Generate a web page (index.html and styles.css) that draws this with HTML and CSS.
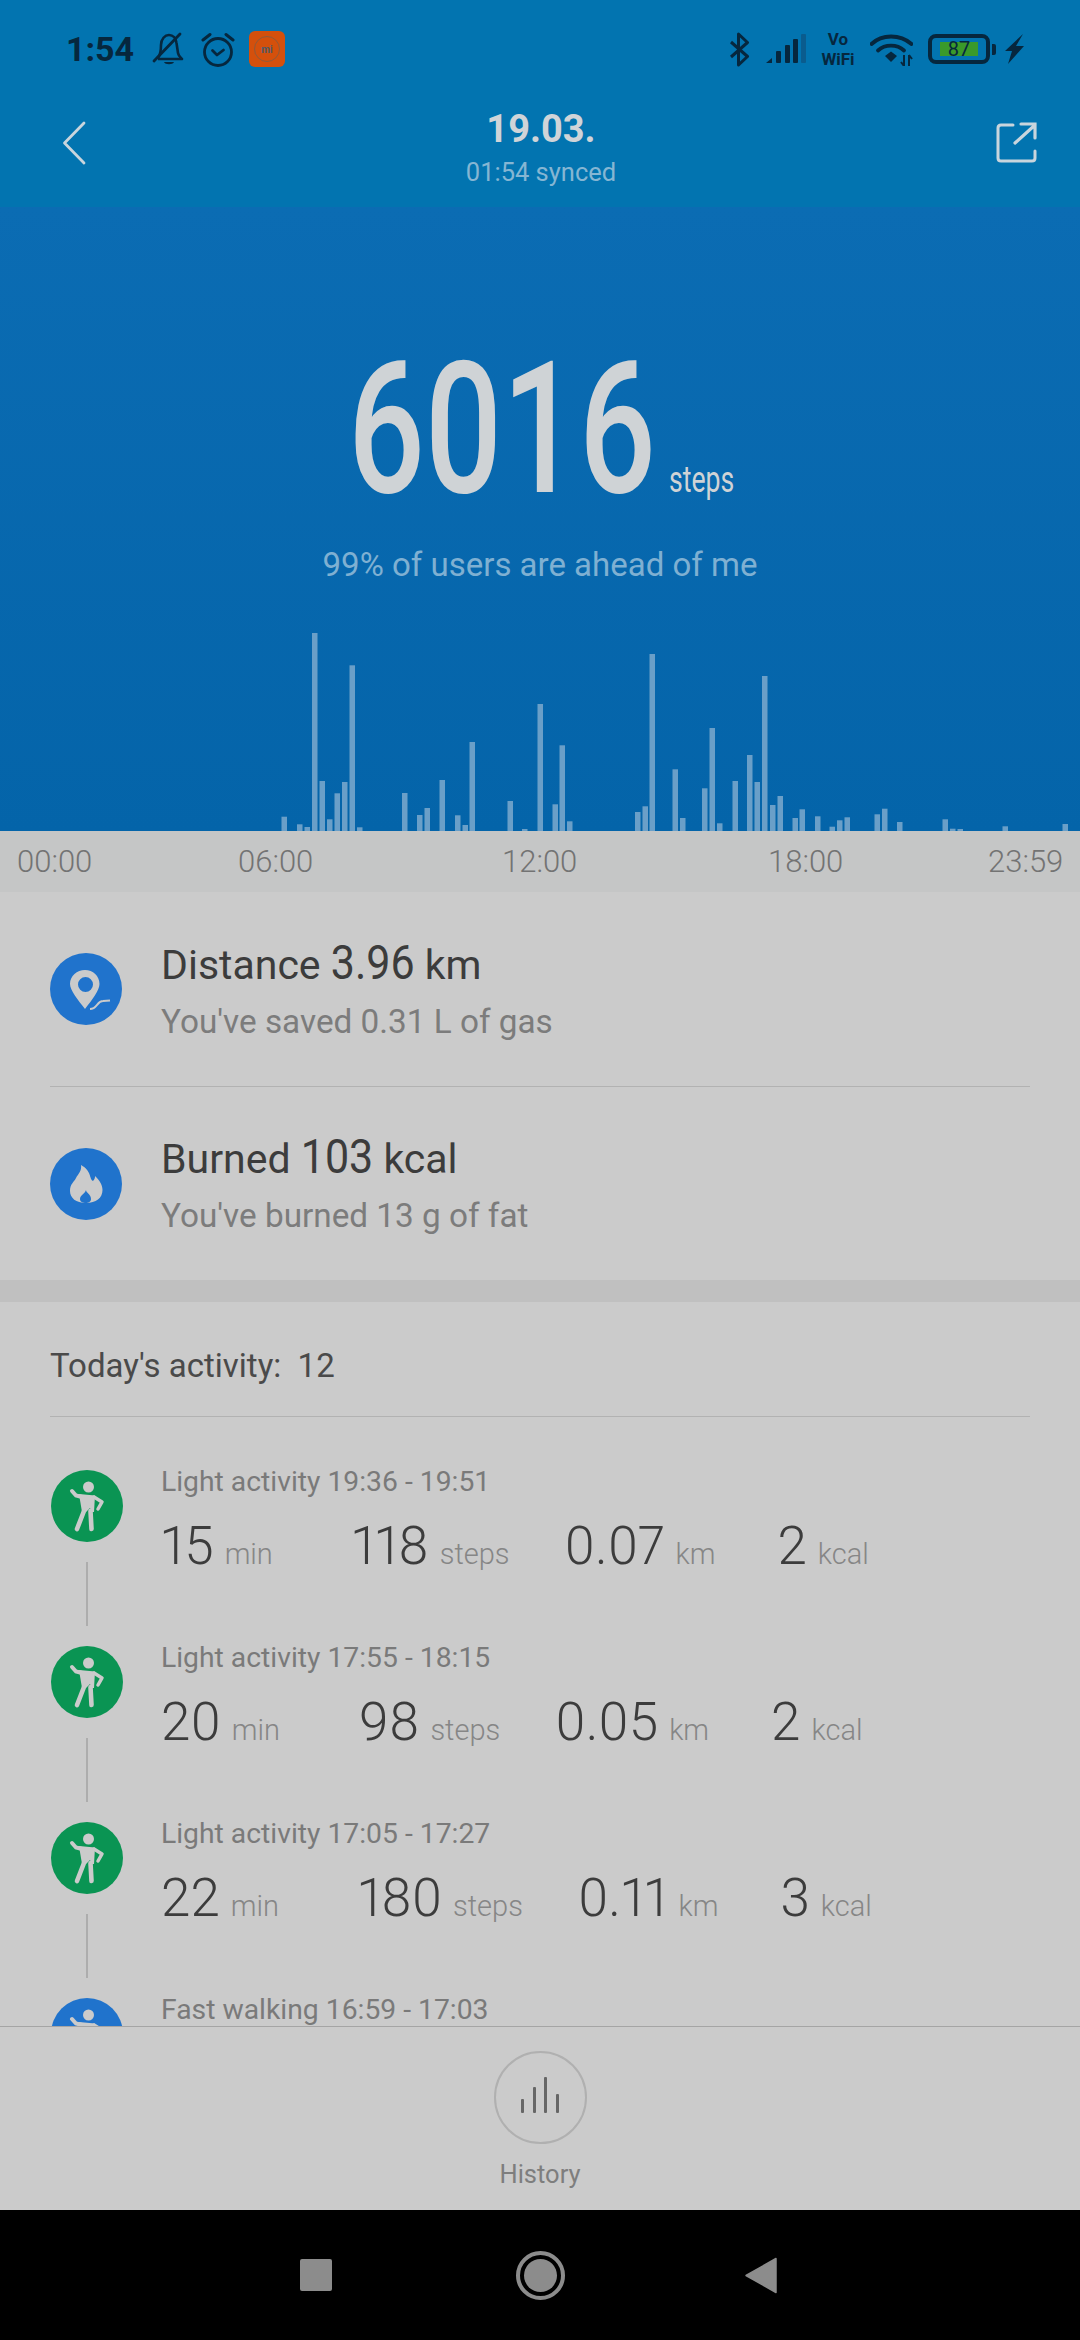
FILE: index.html
```html
<!DOCTYPE html>
<html lang="en">
<head>
    <meta charset="UTF-8">
    <meta name="viewport" content="width=device-width, initial-scale=1.0">
    <title>Steps</title>
    <link rel="stylesheet" href="styles.css">
</head>
<body>
    <svg class="defs" width="0" height="0">
        <symbol id="person" viewBox="0 0 72 72">
            <circle cx="37.5" cy="17" r="5.5" fill="#cbcbcb"/>
            <path d="M28 24 L44 25.5 L43 42 L40.5 42 L39 38 L35 42 L31 42 Z" fill="#cbcbcb"/>
            <path d="M31 27 L25 25.5 L21 21" fill="none" stroke="#cbcbcb" stroke-width="4" stroke-linecap="round"/>
            <path d="M43 27 L51 32 L47 39" fill="none" stroke="#cbcbcb" stroke-width="3.5" stroke-linecap="round" stroke-linejoin="round"/>
            <path d="M33 41 L26 59 M39.5 41 L40.5 59" fill="none" stroke="#cbcbcb" stroke-width="4.6" stroke-linecap="round"/>
        </symbol>
    </svg>

    <header class="top-bar">
        <div class="status-bar">
            <div class="status-left">
                <span class="clock">1:54</span>
                <svg class="ic-bell" width="32" height="34" viewBox="0 0 32 34">
                    <path d="M6 26 C9 22 9 17 9 13 C9 7 13 3 17 3 C21 3 24 6 24.500 11 L26 21 C26.500 24 28 25 30 27 L6 27" fill="none" stroke="#06273e" stroke-width="2.600" stroke-linejoin="round"/>
                    <path d="M2 29 L28 2" stroke="#06273e" stroke-width="2.800" stroke-linecap="round"/>
                    <path d="M12 30 H22 C21 33 13 33 12 30 Z" fill="#06273e"/>
                </svg>
                <svg class="ic-alarm" width="34" height="35" viewBox="0 0 34 35">
                    <circle cx="17" cy="20" r="13.500" fill="none" stroke="#06273e" stroke-width="2.800"/>
                    <path d="M11.500 18.500 L16 23 L22.500 18" fill="none" stroke="#06273e" stroke-width="2.800" stroke-linecap="round" stroke-linejoin="round"/>
                    <path d="M2 8 L9 2.500 M32 8 L25 2.500" stroke="#06273e" stroke-width="3" stroke-linecap="round"/>
                </svg>
                <div class="mi-app">
                    <span class="mi-ring">mi</span>
                </div>
            </div>
            <div class="status-right">
                <svg class="ic-bt" width="21" height="35" viewBox="0 0 21 35">
                    <path d="M2 10 L18.500 24.500 L9.500 33 V2 L18.500 10.500 L2 25" fill="none" stroke="#06273e" stroke-width="3" stroke-linejoin="round"/>
                </svg>
                <svg class="ic-signal" width="40" height="30" viewBox="0 0 40 30">
                    <path d="M0 29 L6 24 V29 Z" fill="#06273e"/>
                    <rect x="10" y="17" width="5" height="12" rx="1" fill="#06273e"/>
                    <rect x="19" y="11" width="5" height="18" rx="1" fill="#06273e"/>
                    <rect x="27" y="5" width="5" height="24" rx="1" fill="#06273e"/>
                    <rect x="35" y="0" width="5" height="29" rx="1" fill="#0a5c8e"/>
                </svg>
                <div class="vowifi">Vo<br>WiFi</div>
                <svg class="ic-wifi" width="43" height="33" viewBox="0 0 43 33">
                    <path d="M1.500 11 C12 1 30 1 41.500 11" fill="none" stroke="#06273e" stroke-width="3.800" stroke-linecap="round"/>
                    <path d="M8 17.500 C15 11 27 11 34 17.500" fill="none" stroke="#06273e" stroke-width="3.800" stroke-linecap="round"/>
                    <path d="M15 23 L21 18.500 L27 23 L21 29 Z" fill="#06273e"/>
                    <path d="M34 22 V33 M39 22 V33 M34 33 L31 29 M39 22 L42 26" fill="none" stroke="#06273e" stroke-width="2"/>
                </svg>
                <div class="battery">
                    <div class="battery-body">
                        <div class="battery-fill">87</div>
                    </div>
                    <div class="battery-nub"></div>
                </div>
                <svg class="ic-bolt" width="20" height="30" viewBox="0 0 20 30">
                    <path d="M19 0 L1 17 H8 L4 30 L20 12 H12 Z" fill="#06273e"/>
                </svg>
            </div>
        </div>
        <div class="title-bar">
            <svg class="ic-back" width="24" height="44" viewBox="0 0 24 44">
                <path d="M22 2 L2.500 22 L22 42" fill="none" stroke="#c9d5dd" stroke-width="2.800" stroke-linecap="round" stroke-linejoin="round"/>
            </svg>
            <div class="title-text">
                <div class="title-date">19.03.</div>
                <div class="title-sync">01:54 synced</div>
            </div>
            <svg class="ic-share" width="42" height="42" viewBox="0 0 42 42">
                <path d="M17 3 H5 Q2 3 2 6 V36 Q2 39 5 39 H36 Q39 39 39 36 V29" fill="none" stroke="#c9d5dd" stroke-width="3" stroke-linecap="round"/>
                <path d="M19 21 L39 3 M25 2 H39 V16" fill="none" stroke="#c9d5dd" stroke-width="3.200" stroke-linecap="round"/>
            </svg>
        </div>
    </header>

    <section class="hero">
        <div class="step-count">
            <div class="step-num"><span>6016</span></div>
            <div class="step-unit"><span>steps</span></div>
        </div>
        <p class="rank">99% of users are ahead of me</p>
        <svg class="chart" width="1080" height="200" viewBox="0 0 1080 200">
            <g fill="#6a9fc8">
                <rect x="281.500" y="185.700" width="5.500" height="14.300"/>
                <rect x="297" y="193.300" width="5.500" height="6.700"/>
                <rect x="304.500" y="196" width="5.500" height="4"/>
                <rect x="312" y="2" width="5.500" height="198"/>
                <rect x="319.500" y="150" width="5.500" height="50"/>
                <rect x="327" y="188.300" width="5.500" height="11.700"/>
                <rect x="334.500" y="162.300" width="5.500" height="37.700"/>
                <rect x="342" y="151" width="5.500" height="49"/>
                <rect x="349.500" y="34.300" width="5.500" height="165.700"/>
                <rect x="357" y="196.300" width="5.500" height="3.700"/>
                <rect x="402" y="162" width="5.500" height="38"/>
                <rect x="417" y="184" width="5.500" height="16"/>
                <rect x="424.500" y="177" width="5.500" height="23"/>
                <rect x="439.500" y="149" width="5.500" height="51"/>
                <rect x="455" y="184.300" width="5.500" height="15.700"/>
                <rect x="462.500" y="194" width="5.500" height="6"/>
                <rect x="469.500" y="111" width="5.500" height="89"/>
                <rect x="507.500" y="170" width="5.500" height="30"/>
                <rect x="522" y="198" width="5.500" height="2"/>
                <rect x="537.500" y="73" width="5.500" height="127"/>
                <rect x="552.500" y="173.300" width="5.500" height="26.700"/>
                <rect x="559.500" y="114.300" width="5.500" height="85.700"/>
                <rect x="567" y="190.300" width="5.500" height="9.700"/>
                <rect x="635" y="181" width="5.500" height="19"/>
                <rect x="642.500" y="175.300" width="5.500" height="24.700"/>
                <rect x="649.500" y="23" width="5.500" height="177"/>
                <rect x="672.500" y="138.300" width="5.500" height="61.700"/>
                <rect x="680" y="187" width="5.500" height="13"/>
                <rect x="702" y="157.300" width="5.500" height="42.700"/>
                <rect x="709.500" y="97" width="5.500" height="103"/>
                <rect x="717" y="192.300" width="5.500" height="7.700"/>
                <rect x="732.500" y="150" width="5.500" height="50"/>
                <rect x="747" y="124" width="5.500" height="76"/>
                <rect x="754.500" y="151" width="5.500" height="49"/>
                <rect x="762" y="45" width="5.500" height="155"/>
                <rect x="770" y="174" width="5.500" height="26"/>
                <rect x="777.500" y="165" width="5.500" height="35"/>
                <rect x="792.500" y="187" width="5.500" height="13"/>
                <rect x="799.500" y="178.300" width="5.500" height="21.700"/>
                <rect x="815" y="185.300" width="5.500" height="14.700"/>
                <rect x="829.500" y="195.700" width="5.500" height="4.300"/>
                <rect x="837" y="189.300" width="5.500" height="10.700"/>
                <rect x="844.500" y="186.300" width="5.500" height="13.700"/>
                <rect x="874.500" y="183.300" width="5.500" height="16.700"/>
                <rect x="882" y="177.700" width="5.500" height="22.300"/>
                <rect x="897" y="191" width="5.500" height="9"/>
                <rect x="942.500" y="188.300" width="5.500" height="11.700"/>
                <rect x="950" y="197.700" width="5.500" height="2.300"/>
                <rect x="957.500" y="198" width="5.500" height="2"/>
                <rect x="1002.500" y="195.300" width="5.500" height="4.700"/>
                <rect x="1062.500" y="193" width="5.500" height="7"/>
            </g>
        </svg>
    </section>

    <div class="time-axis">
        <span>00:00</span>
        <span>06:00</span>
        <span>12:00</span>
        <span>18:00</span>
        <span>23:59</span>
    </div>

    <section class="stats">
        <div class="stat-row">
            <svg class="stat-icon" width="72" height="72" viewBox="0 0 72 72">
                <circle cx="36" cy="36" r="36" fill="#2073cc"/>
                <path fill-rule="evenodd" d="M35 17 C43 17 49.500 23 49.500 31 C49.500 37 42 47 35 56 C28 47 20 37 20 31 C20 23 27 17 35 17 Z M35.500 24 A7.500 7.500 0 1 0 35.500 39 A7.500 7.500 0 1 0 35.500 24 Z" fill="#cbcbcb"/>
                <path d="M40 56 C47 56 47 48 53 48 L60 47.500" fill="none" stroke="#cbcbcb" stroke-width="2"/>
            </svg>
            <div class="stat-text">
                <div class="stat-title">Distance <b>3.96</b> km</div>
                <div class="stat-sub">You've saved 0.31 L of gas</div>
            </div>
        </div>
        <div class="stat-row">
            <svg class="stat-icon" width="72" height="72" viewBox="0 0 72 72">
                <circle cx="36" cy="36" r="36" fill="#2073cc"/>
                <path d="M31 17 C42 23 39 31 43 33 C45 31 45 29 45 28 C50 33 52.500 37 52.500 42 C52.500 50 46 55 36 55 C26 55 20 50 20 43 C20 36 24 34 26 30 C28 26 32 23 31 17 Z" fill="#cbcbcb"/>
                <path d="M36 42 C36 45 41 46 41 51 C41 54 38 55 36 55 C33 55 30 54 30 51 C30 47 35 46 36 42 Z" fill="#2073cc"/>
            </svg>
            <div class="stat-text">
                <div class="stat-title">Burned <b>103</b> kcal</div>
                <div class="stat-sub">You've burned 13 g of fat</div>
            </div>
        </div>
    </section>

    <div class="band"></div>

    <section class="activity">
        <div class="activity-head">
            <span>Today's activity:&nbsp; 12</span>
        </div>
        <div class="activity-list">
            <div class="act-row">
                <div class="act-rail">
                    <svg class="act-icon" width="72" height="72"><circle cx="36" cy="36" r="36" fill="#0a9453"/><use href="#person" width="72" height="72"/></svg>
                    <div class="act-line"></div>
                </div>
                <div class="act-body">
                    <div class="act-name">Light activity 19:36 - 19:51</div>
                    <div class="act-nums">
                        <div class="m-time"><b>15</b><small>min</small></div>
                        <div class="m-steps"><b>118</b><small>steps</small></div>
                        <div class="m-dist"><b>0.07</b><small>km</small></div>
                        <div class="m-kcal"><b>2</b><small>kcal</small></div>
                    </div>
                </div>
            </div>
            <div class="act-row">
                <div class="act-rail">
                    <svg class="act-icon" width="72" height="72"><circle cx="36" cy="36" r="36" fill="#0a9453"/><use href="#person" width="72" height="72"/></svg>
                    <div class="act-line"></div>
                </div>
                <div class="act-body">
                    <div class="act-name">Light activity 17:55 - 18:15</div>
                    <div class="act-nums">
                        <div class="m-time"><b>20</b><small>min</small></div>
                        <div class="m-steps"><b>98</b><small>steps</small></div>
                        <div class="m-dist"><b>0.05</b><small>km</small></div>
                        <div class="m-kcal"><b>2</b><small>kcal</small></div>
                    </div>
                </div>
            </div>
            <div class="act-row">
                <div class="act-rail">
                    <svg class="act-icon" width="72" height="72"><circle cx="36" cy="36" r="36" fill="#0a9453"/><use href="#person" width="72" height="72"/></svg>
                    <div class="act-line"></div>
                </div>
                <div class="act-body">
                    <div class="act-name">Light activity 17:05 - 17:27</div>
                    <div class="act-nums">
                        <div class="m-time"><b>22</b><small>min</small></div>
                        <div class="m-steps"><b>180</b><small>steps</small></div>
                        <div class="m-dist"><b>0.11</b><small>km</small></div>
                        <div class="m-kcal"><b>3</b><small>kcal</small></div>
                    </div>
                </div>
            </div>
            <div class="act-row">
                <div class="act-rail">
                    <svg class="act-icon" width="72" height="72"><circle cx="36" cy="36" r="36" fill="#2073cc"/><use href="#person" width="72" height="72"/></svg>
                </div>
                <div class="act-body">
                    <div class="act-name">Fast walking 16:59 - 17:03</div>
                </div>
            </div>
        </div>
    </section>

    <footer class="bottom-tab">
        <div class="history-btn">
            <div class="history-bar bar-1"></div>
            <div class="history-bar bar-2"></div>
            <div class="history-bar bar-3"></div>
            <div class="history-bar bar-4"></div>
        </div>
        <div class="history-label">History</div>
    </footer>

    <nav class="nav-bar">
        <div class="nav-square"></div>
        <div class="nav-home"><div class="nav-dot"></div></div>
        <svg class="nav-back" width="32" height="37" viewBox="0 0 32 37">
            <path d="M31 1.500 V35.500 L1 18.500 Z" fill="#8c8c8c" stroke="#8c8c8c" stroke-width="1.500" stroke-linejoin="round"/>
        </svg>
    </nav>
</body>
</html>
```

FILE: styles.css
```css
* {
    margin: 0;
    padding: 0;
    box-sizing: border-box;
}

html, body {
    width: 1080px;
    height: 2340px;
    overflow: hidden;
}

body {
    display: flex;
    flex-direction: column;
    background-color: #cbcbcb;
    font-family: Roboto, "Liberation Sans", sans-serif;
}

.defs {
    position: absolute;
}

/* header */
.top-bar {
    height: 207px;
    flex-shrink: 0;
    background-color: #0274b0;
}

.status-bar {
    display: flex;
    justify-content: space-between;
    align-items: center;
    height: 98px;
    padding: 0 56px 0 66px;
}

.status-left, .status-right {
    display: flex;
    align-items: center;
}

.clock {
    font-size: 34px;
    font-weight: 700;
    color: #06273e;
    width: 86px;
}

.ic-alarm {
    margin-left: 17px;
}

.mi-app {
    display: flex;
    align-items: center;
    justify-content: center;
    width: 36px;
    height: 36px;
    margin-left: 14px;
    background-color: #d4500c;
    border-radius: 6px;
}

.mi-ring {
    display: flex;
    align-items: center;
    justify-content: center;
    width: 26px;
    height: 26px;
    border: 1px solid #8f5a3a;
    border-radius: 50%;
    font-size: 10px;
    font-weight: 700;
    color: #4d5a68;
}

.ic-signal {
    margin-left: 16px;
}

.vowifi {
    width: 38px;
    margin-left: 13px;
    font-size: 17px;
    font-weight: 700;
    line-height: 20px;
    color: #06273e;
    text-align: center;
}

.ic-wifi {
    margin-left: 13px;
}

.battery {
    display: flex;
    align-items: center;
    margin-left: 15px;
}

.battery-body {
    width: 62px;
    height: 30px;
    padding: 4px 8px;
    border: 4px solid #06273e;
    border-radius: 8px;
}

.battery-fill {
    height: 100%;
    background-color: #3a9a2a;
    font-size: 20px;
    line-height: 15px;
    color: #06273e;
    text-align: center;
}

.battery-nub {
    width: 4px;
    height: 11px;
    margin-left: 2px;
    background-color: #06273e;
    border-radius: 0 2px 2px 0;
}

.ic-bolt {
    margin-left: 8px;
}

.title-bar {
    display: flex;
    align-items: center;
    justify-content: space-between;
    height: 109px;
    padding: 0 42px 19px 62px;
}

.title-text {
    padding-top: 5px;
    text-align: center;
}

.title-date {
    padding-top: 2px;
    font-size: 38px;
    font-weight: 700;
    line-height: 46px;
    color: #d0d4d8;
}

.title-sync {
    margin-top: 4px;
    font-size: 25.500px;
    line-height: 32px;
    color: #85b6d3;
}

/* steps */
.hero {
    display: flex;
    flex-direction: column;
    align-items: center;
    height: 624px;
    flex-shrink: 0;
    padding-top: 131px;
    background: linear-gradient(#0b6cb3, #0464a9);
}

.step-count {
    display: flex;
    align-items: baseline;
}

.step-num {
    width: 307px;
    font-size: 183px;
    line-height: 1;
    color: #cfd3d6;
}

.step-num span {
    display: inline-block;
    font-weight: 500;
    transform: scaleX(0.74);
    transform-origin: left;
}

.step-unit {
    width: 63px;
    margin-left: 14px;
    font-size: 36px;
    color: #cfd3d6;
}

.step-unit span {
    display: inline-block;
    transform: scaleX(0.74);
    transform-origin: left;
}

.rank {
    margin-top: 24px;
    font-size: 33px;
    line-height: 40px;
    color: #7fb0d2;
}

.chart {
    display: block;
    margin-top: auto;
}

.time-axis {
    display: grid;
    grid-template-columns: 221px 264px 266px 220px auto;
    align-items: center;
    height: 61px;
    flex-shrink: 0;
    padding-left: 17px;
    background-color: #c5c6c6;
    font-size: 31px;
    font-weight: 300;
    color: #737373;
}

/* distance and kcal */
.stats {
    flex-shrink: 0;
    padding: 0 50px;
}

.stat-row {
    display: flex;
    align-items: center;
    gap: 39px;
    height: 194px;
}

.stat-row + .stat-row {
    height: 194px;
    border-top: 1px solid #b2b2b2;
}

.stat-text {
    padding-top: 2px;
}

.stat-title {
    font-size: 41px;
    line-height: 50px;
    color: #3c3c3c;
}

.stat-title b {
    display: inline-block;
    font-size: 43px;
    font-weight: 400;
    transform: scaleY(1.12);
    transform-origin: 50% 80%;
}

.stat-sub {
    margin-top: 12px;
    font-size: 33.300px;
    line-height: 40px;
    color: #7c7c7c;
}

.band {
    height: 22px;
    flex-shrink: 0;
    background-color: #c0c0c0;
}

/* activity list */
.activity {
    display: flex;
    flex-direction: column;
    flex: 1;
    min-height: 0;
    padding: 0 50px;
}

.activity-head {
    display: flex;
    align-items: center;
    height: 115px;
    flex-shrink: 0;
    padding-top: 13px;
    border-bottom: 1px solid #b2b2b2;
    font-size: 33px;
    color: #4a4a4a;
}

.activity-list {
    flex: 1;
    min-height: 0;
    padding-top: 53px;
    overflow: hidden;
}

.act-row {
    display: flex;
    height: 176px;
    padding-left: 1px;
}

.act-rail {
    display: flex;
    flex-direction: column;
    align-items: center;
    width: 72px;
    margin-right: 38px;
}

.act-icon {
    flex-shrink: 0;
}

.act-line {
    width: 2px;
    height: 64px;
    margin-top: 20px;
    background-color: #adadad;
}

.act-body {
    margin-top: -6px;
}

.act-name {
    font-size: 28.300px;
    line-height: 36px;
    color: #7a7a7a;
}

.act-nums {
    display: flex;
    margin-top: 16px;
    line-height: 60px;
}

.act-nums b {
    font-size: 53px;
    font-weight: 300;
    font-variant-numeric: proportional-nums;
    color: #3c3c3c;
}

.act-nums small {
    margin-left: 11px;
    font-size: 29px;
    font-weight: 300;
    color: #868686;
}

.m-steps {
    margin-left: 79px;
}

.m-dist {
    margin-left: 55px;
}

.m-kcal {
    margin-left: 62px;
}

/* bottom */
.bottom-tab {
    position: relative;
    display: flex;
    flex-direction: column;
    align-items: center;
    height: 184px;
    flex-shrink: 0;
    padding-top: 24px;
    background-color: #cbcbcb;
    border-top: 1px solid #a5a5a5;
}

.history-btn {
    display: flex;
    align-items: flex-end;
    justify-content: center;
    gap: 8.500px;
    width: 93px;
    height: 93px;
    padding-bottom: 29px;
    border: 2px solid #b0b0b0;
    border-radius: 50%;
}

.history-bar {
    width: 3px;
    background-color: #666;
    border-radius: 1px;
}

.bar-1 { height: 14px; }
.bar-2 { height: 26px; }
.bar-3 { height: 36px; }
.bar-4 { height: 19px; }

.history-label {
    margin-top: 14px;
    font-size: 25.500px;
    line-height: 32px;
    color: #7e7e7e;
}

.nav-bar {
    display: flex;
    align-items: center;
    height: 130px;
    flex-shrink: 0;
    padding-left: 300px;
    background-color: #000;
}

.nav-square {
    width: 32px;
    height: 32px;
    background-color: #8c8c8c;
    border-radius: 2px;
}

.nav-home {
    display: flex;
    align-items: center;
    justify-content: center;
    width: 49px;
    height: 49px;
    margin-left: 184px;
    border: 4px solid #8c8c8c;
    border-radius: 50%;
}

.nav-dot {
    width: 33px;
    height: 33px;
    background-color: #8c8c8c;
    border-radius: 50%;
}

.nav-back {
    margin-left: 180px;
}
```
